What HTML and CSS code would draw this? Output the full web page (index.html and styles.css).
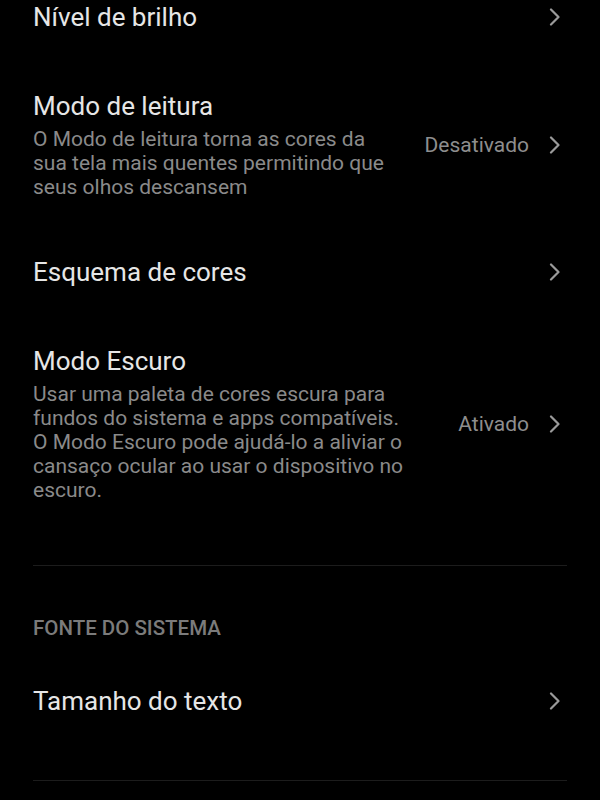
FILE: index.html
```html
<!DOCTYPE html>
<html>
<head>
    <title>Tela</title>
    <link rel="stylesheet" href="styles.css">
</head>
<body>
    <div class="settings">
        <div class="section">
            <div class="item">
                <div class="item-text">
                    <div class="item-title">Nível de brilho</div>
                </div>
                <div class="item-end">
                    <svg class="chevron" width="12" height="18" viewBox="0 0 12 18"><path d="M2 1.5 L9.5 9 L2 16.5" /></svg>
                </div>
            </div>
            <div class="item">
                <div class="item-text">
                    <div class="item-title">Modo de leitura</div>
                    <div class="item-desc">O Modo de leitura torna as cores da<br>sua tela mais quentes permitindo que<br>seus olhos descansem</div>
                </div>
                <div class="item-end">
                    <span class="item-value">Desativado</span>
                    <svg class="chevron" width="12" height="18" viewBox="0 0 12 18"><path d="M2 1.5 L9.5 9 L2 16.5" /></svg>
                </div>
            </div>
            <div class="item">
                <div class="item-text">
                    <div class="item-title">Esquema de cores</div>
                </div>
                <div class="item-end">
                    <svg class="chevron" width="12" height="18" viewBox="0 0 12 18"><path d="M2 1.5 L9.5 9 L2 16.5" /></svg>
                </div>
            </div>
            <div class="item">
                <div class="item-text">
                    <div class="item-title">Modo Escuro</div>
                    <div class="item-desc">Usar uma paleta de cores escura para<br>fundos do sistema e apps compatíveis.<br>O Modo Escuro pode ajudá-lo a aliviar o<br>cansaço ocular ao usar o dispositivo no<br>escuro.</div>
                </div>
                <div class="item-end">
                    <span class="item-value">Ativado</span>
                    <svg class="chevron" width="12" height="18" viewBox="0 0 12 18"><path d="M2 1.5 L9.5 9 L2 16.5" /></svg>
                </div>
            </div>
        </div>

        <div class="section">
            <div class="section-header">FONTE DO SISTEMA</div>
            <div class="item">
                <div class="item-text">
                    <div class="item-title">Tamanho do texto</div>
                </div>
                <div class="item-end">
                    <svg class="chevron" width="12" height="18" viewBox="0 0 12 18"><path d="M2 1.5 L9.5 9 L2 16.5" /></svg>
                </div>
            </div>
        </div>
        <div class="section"></div>
    </div>
</body>
</html>
```

FILE: styles.css
```css
body {
    margin: 0;
    background: #000;
    font-family: Roboto, "Noto Sans", sans-serif;
    overflow: hidden;
}

.settings {
    margin-top: -28px;
    padding: 0 33px;
}

.section {
    padding-bottom: 35px;
}

.section + .section {
    border-top: 1px solid #1c1c1c;
}

.section-header {
    padding: 50px 0 16px;
    font-size: 20.5px;
    line-height: 24px;
    font-weight: 500;
    color: #7b7b7b;
}

.item {
    display: flex;
    align-items: center;
    padding: 29px 0 28px;
}

.item-text {
    flex: 1;
}

.item-title {
    font-size: 26px;
    line-height: 32px;
    color: #e6e6e6;
}

.item-desc {
    margin-top: 5px;
    font-size: 21px;
    line-height: 24px;
    white-space: nowrap;
    color: #8a8a8a;
}

.item-end {
    display: flex;
    align-items: center;
    gap: 20px;
}

.item-value {
    font-size: 21px;
    color: #8e8e8e;
}

.chevron {
    display: block;
    margin-right: 6px;
}

.chevron path {
    fill: none;
    stroke: #9a9a9a;
    stroke-width: 2.2;
    stroke-linecap: round;
    stroke-linejoin: round;
}
```
